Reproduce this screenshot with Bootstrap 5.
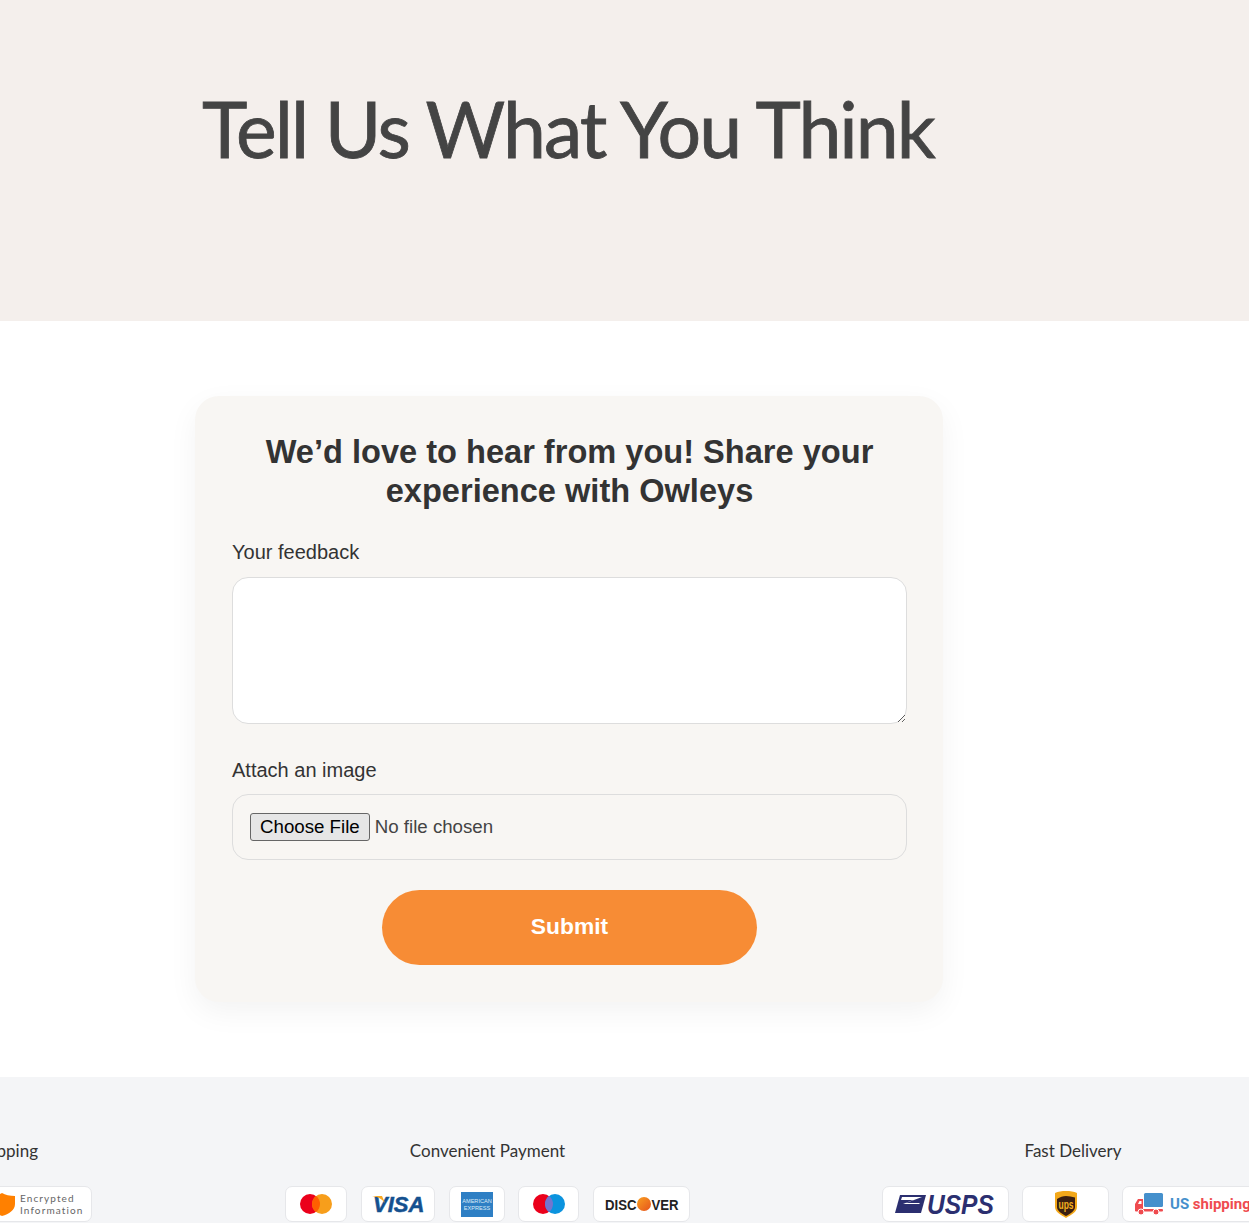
<!DOCTYPE html>
<html lang="en">
<head>
  <meta charset="UTF-8" />
  <meta name="viewport" content="width=device-width, initial-scale=1.0" />
  <title>Tell Us What You Think</title>
  <link href="https://cdn.jsdelivr.net/npm/bootstrap@5.3.0/dist/css/bootstrap.min.css" rel="stylesheet">
  <style>
    html, body { overflow: hidden; }
    body {
      font-family: "Liberation Sans", Arial, sans-serif;
      background-color: #fff;
      color: #333;
    }

    .hero-band {
      height: 321px;
      background-color: #f4efec;
      padding: 78px 0 0 202px;
    }

    .hero-band h1 {
      font-family: Lato, sans-serif;
      font-size: 77px;
      line-height: 100px;
      font-weight: 400;
      letter-spacing: -2px;
      -webkit-text-stroke: 0.8px #444;
      color: #444;
      margin: 0;
      white-space: nowrap;
    }

    .form-wrap {
      padding: 75px 0 75px 195px;
    }

    .fb-card {
      width: 748px;
      padding: 36px 36px 37px 37px;
      border-radius: 24px;
      background-color: #f8f6f3;
      box-shadow: 0 10px 30px rgba(0, 0, 0, 0.05);
    }

    .fb-card h2 {
      font-family: "Liberation Sans", Arial, sans-serif;
      font-size: 32.6px;
      line-height: 39px;
      font-weight: 700;
      color: #333;
      text-align: center;
      margin: 0 0 30px;
    }

    .fb-label {
      display: block;
      font-size: 20px;
      line-height: 24px;
      color: #333;
      margin: 0 0 13px;
    }

    .fb-label-file {
      margin-bottom: 12px;
    }

    .fb-text {
      display: block;
      width: 100%;
      height: 147px;
      border: 1px solid #ddd;
      border-radius: 16px;
      background-color: #fff;
      margin-bottom: 34px;
    }

    .fb-file {
      display: block;
      width: 100%;
      height: 66px;
      padding: 18px 17px;
      font-size: 18.7px;
      line-height: 1.15;
      color: #444;
      border: 1px solid #ddd;
      border-radius: 16px;
      margin-bottom: 30px;
    }

    .fb-file::file-selector-button {
      height: 28px;
      padding: 0 9px;
      margin-inline-end: 5px;
      color: #000;
      background-color: #e6e6e6;
      border: 1px solid #666;
      border-radius: 3px;
    }

    .fb-submit {
      display: block;
      width: 375px;
      height: 75px;
      margin: 0 auto;
      padding: 0 0 2px;
      border: 0;
      border-radius: 38px;
      background-color: #f78c35;
      color: #fff;
      font-size: 22.8px;
      font-weight: 700;
    }

    .trust-band {
      height: 146px;
      overflow: hidden;
      background-color: #f4f5f7;
      padding-top: 63px;
    }

    .trust-row {
      margin-left: -120px;
      gap: 192px;
    }

    .trust-group {
      flex: none;
    }

    .trust-title {
      font-family: Lato, sans-serif;
      font-size: 17px;
      line-height: 22px;
      color: #333;
      text-align: center;
      margin-bottom: 24px;
      white-space: nowrap;
    }

    .trust-title-left {
      padding-right: 16px;
    }

    .chips-left {
      padding-right: 1px;
    }

    .pay-chip {
      height: 36px;
      flex: none;
      background-color: #fff;
      border: 1px solid #e6e7ea;
      border-radius: 7px;
      overflow: hidden;
    }

    .chip-text {
      font-family: Lato, sans-serif;
      font-size: 10px;
      line-height: 12px;
      letter-spacing: 1.1px;
      color: #666;
      white-space: nowrap;
    }

    .ship-text {
      font-family: Roboto, sans-serif;
      font-size: 15px;
      font-weight: 700;
      color: #ef4b4f;
      white-space: nowrap;
    }

    .ship-text span {
      color: #4590cc;
    }
  </style>
</head>
<body>
  <section class="hero-band">
    <h1>Tell Us What You Think</h1>
  </section>

  <div class="form-wrap">
    <form class="fb-card">
      <h2>We’d love to hear from you! Share your experience with Owleys</h2>
      <label class="fb-label" for="feedback">Your feedback</label>
      <textarea class="fb-text" id="feedback"></textarea>
      <label class="fb-label fb-label-file" for="photo">Attach an image</label>
      <input class="fb-file" id="photo" type="file" accept="image/*">
      <button class="fb-submit" type="button">Submit</button>
    </form>
  </div>

  <footer class="trust-band">
    <div class="trust-row d-flex">
      <div class="trust-group" style="width: 213px">
        <div class="trust-title trust-title-left">Secure Shipping</div>
        <div class="chips-left d-flex justify-content-end">
          <div class="pay-chip d-flex align-items-center" style="width: 112px; padding-left: 6px; gap: 3px">
            <svg width="30" height="24" viewBox="0 0 30 24"><path d="M15 1c3 2 8 3 13 3v8c0 6-6 10-13 12C8 22 2 18 2 12V4c5 0 10-1 13-3z" fill="#ff8000"/></svg>
            <div class="chip-text">Encrypted<br>Information</div>
          </div>
        </div>
      </div>

      <div class="trust-group" style="width: 405px">
        <div class="trust-title">Convenient Payment</div>
        <div class="d-flex justify-content-between">
          <div class="pay-chip d-flex align-items-center justify-content-center" style="width: 62px">
            <svg width="34" height="22" viewBox="0 0 34 22"><circle cx="11" cy="11" r="10" fill="#eb001b"/><circle cx="23" cy="11" r="10" fill="#f79e1b"/><path d="M17 3a10 10 0 0 1 0 16 10 10 0 0 1 0-16z" fill="#ff5f00"/></svg>
          </div>
          <div class="pay-chip d-flex align-items-center justify-content-center" style="width: 74px">
            <svg width="52" height="24" viewBox="0 0 52 24"><text x="1" y="20" font-family="Liberation Sans" font-size="22" font-weight="700" font-style="italic" fill="#14508f" stroke="#14508f" stroke-width=".5">VISA</text><path d="M0 4h10l3 7c-2-3-6-6-13-7z" fill="#f7a823"/></svg>
          </div>
          <div class="pay-chip d-flex align-items-center justify-content-center" style="width: 56px">
            <svg width="32" height="25" viewBox="0 0 32 25"><rect width="32" height="25" fill="#2e7fc4"/><text x="16" y="11" text-anchor="middle" font-family="Liberation Sans" font-size="5.600" fill="#dcebf7">AMERICAN</text><text x="16" y="18" text-anchor="middle" font-family="Liberation Sans" font-size="5.600" fill="#dcebf7">EXPRESS</text></svg>
          </div>
          <div class="pay-chip d-flex align-items-center justify-content-center" style="width: 61px">
            <svg width="34" height="22" viewBox="0 0 34 22"><circle cx="11" cy="11" r="10" fill="#eb001b"/><circle cx="23" cy="11" r="10" fill="#0b93de"/><path d="M17 3a10 10 0 0 1 0 16 10 10 0 0 1 0-16z" fill="#7375cf"/></svg>
          </div>
          <div class="pay-chip d-flex align-items-center justify-content-center" style="width: 97px">
            <svg width="76" height="18" viewBox="0 0 76 18"><defs><linearGradient id="disc" x1="0" y1="0" x2="1" y2="1"><stop offset="0" stop-color="#f9a020"/><stop offset="1" stop-color="#e6531d"/></linearGradient></defs><text transform="translate(1 15) scale(.85 1)" font-family="Liberation Sans" font-size="15.500" font-weight="700" fill="#222">DISC</text><circle cx="40" cy="9" r="7" fill="url(#disc)"/><text transform="translate(47.500 15) scale(.85 1)" font-family="Liberation Sans" font-size="15.500" font-weight="700" fill="#222">VER</text></svg>
          </div>
        </div>
      </div>

      <div class="trust-group" style="width: 382px">
        <div class="trust-title">Fast Delivery</div>
        <div class="d-flex justify-content-between">
          <div class="pay-chip d-flex align-items-center" style="width: 127px; padding-left: 12px">
            <svg width="110" height="24" viewBox="0 0 110 24"><path d="M5 3h26l-5 18H0z" fill="#2b2f70"/><path d="M7 5h20L11 11l14 0-1 1H8l10-4H6z" fill="#fff"/><text transform="translate(32 22) scale(.91 1)" font-family="Liberation Sans" font-size="27" font-weight="700" font-style="italic" fill="#2b2f70">USPS</text></svg>
          </div>
          <div class="pay-chip d-flex align-items-center justify-content-center" style="width: 87px">
            <svg width="22" height="27" viewBox="0 0 22 27"><path d="M11 0c4 0 8 .6 11 2v14c0 5-6 8-11 11C6 24 0 21 0 16V2c3-1.400 7-2 11-2z" fill="#f3a81a"/><path d="M11 5c3 0 6 .5 9 1.500V16c0 4-5 7-9 9-4-2-9-5-9-9V8c3-2 6-3 9-3z" fill="#3b1f10"/><text transform="translate(11 18) scale(.85 1.350)" text-anchor="middle" font-family="Liberation Sans" font-size="10" font-weight="700" fill="#f5b01f">ups</text></svg>
          </div>
          <div class="pay-chip d-flex align-items-center" style="width: 142px; padding-left: 12px; gap: 6px">
            <svg width="29" height="24" viewBox="0 0 29 24"><rect x="9" y="1" width="19" height="14" rx="1.500" fill="#4590cc"/><path d="M0 19v-7l3-5h5v12z" fill="#ef4b4f"/><path d="M3 12l1.500-3H6.500v3z" fill="#fff"/><rect x="0" y="17" width="28" height="2.500" rx="1" fill="#ef4b4f"/><circle cx="6" cy="20" r="3" fill="#ef4b4f" stroke="#fff"/><circle cx="21" cy="20" r="3" fill="#ef4b4f" stroke="#fff"/></svg>
            <div class="ship-text"><span>US</span> shipping</div>
          </div>
        </div>
      </div>
    </div>
  </footer>

  <script src="https://cdn.jsdelivr.net/npm/bootstrap@5.3.0/dist/js/bootstrap.bundle.min.js"></script>
</body>
</html>
